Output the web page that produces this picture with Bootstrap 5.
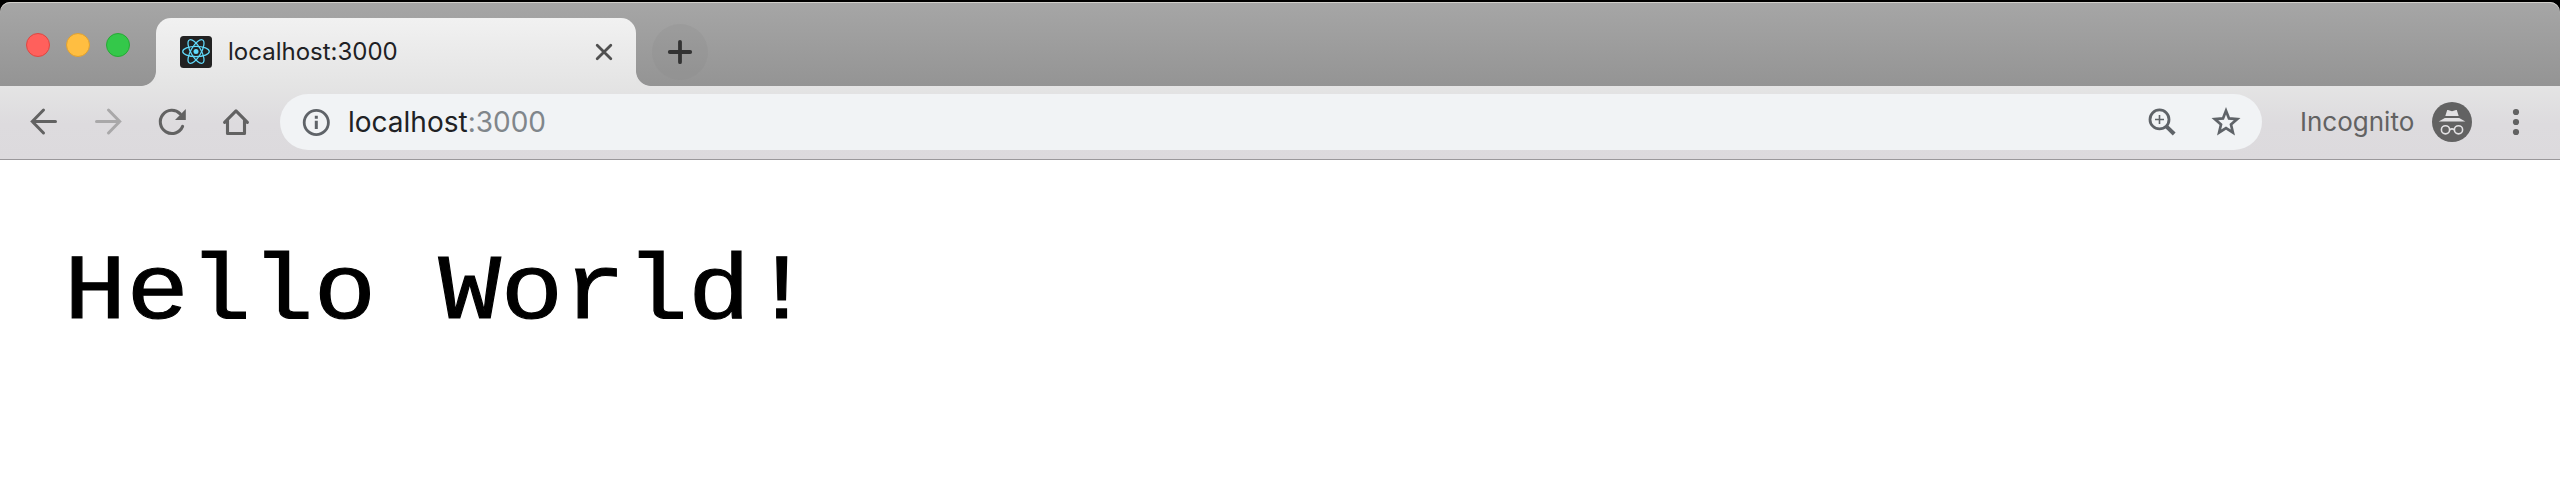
<!DOCTYPE html>
<html lang="en">
<head>
<meta charset="utf-8">
<title>localhost:3000</title>
<link href="https://cdn.jsdelivr.net/npm/bootstrap@5.3.0/dist/css/bootstrap.min.css" rel="stylesheet">
<script src="https://cdn.jsdelivr.net/npm/bootstrap@5.3.0/dist/js/bootstrap.bundle.min.js"></script>
<style>
body{height:504px;font-family:Inter,sans-serif;background:#fff}
svg{display:block;flex:none;overflow:visible}
.chrome{height:160px;background:#000;padding-top:2px}
.strip{height:84px;padding:16px 0 0 26px;background:linear-gradient(#a6a6a6,#949494);border-radius:10px 10px 0 0;box-shadow:inset 0 1px #d0ceca}
.lights{gap:16px;margin-top:15px;width:130px}
.light{width:24px;height:24px;border:1px solid}
.red{background:#ff605c;border-color:#de4742}
.amber{background:#ffbe41;border-color:#dea032}
.green{background:#34c84a;border-color:#27aa35}
.tab-open{width:480px;height:68px;padding:0 24px;border-radius:15px 15px 0 0;background:linear-gradient(#f1f1f1,#e4e4e4)}
.tab-open::before,.tab-open::after{content:"";position:absolute;bottom:0;width:15px;height:15px}
.tab-open::before{left:-15px;background:radial-gradient(circle at 0 0,transparent 14.5px,#e4e4e4 15.3px)}
.tab-open::after{right:-15px;background:radial-gradient(circle at 100% 0,transparent 14.5px,#e4e4e4 15.3px)}
.tab-title{font-size:24px;line-height:30px;margin-left:16px;color:#202124}
.plus{width:56px;height:56px;margin:6px 0 0 16px;background:rgba(135,135,135,.22)}
.tools{height:74px;padding:0 40px 1px 28px;background:linear-gradient(#e4e4e4,#dddbde 52%,#dcdadd);border-bottom:1px solid #9a989b;color:#626262}
.nav-icons{width:252px;gap:32px}
.pill{width:1982px;height:56px;border-radius:28px;background:#f1f3f5;padding:0 22px;color:#5f6368}
.address{font-size:28px;line-height:34px;margin-left:18px;color:#202124}
.port{color:#80868b}
.private{font-size:26px;line-height:34px;margin-left:38px;width:132px}
.hello{font:400 104px/118px "Liberation Mono",monospace;color:#000;margin:81px 0 0 64px;-webkit-text-stroke:1.2px #000;transform:scaleY(.885);transform-origin:0 0}
</style>
</head>
<body class="overflow-hidden">
<header class="chrome">
  <div class="strip d-flex align-items-start">
    <div class="lights d-flex"><span class="light red rounded-circle"></span><span class="light amber rounded-circle"></span><span class="light green rounded-circle"></span></div>
    <div class="tab-open position-relative d-flex align-items-center">
      <svg width="32" height="32" viewBox="0 0 32 32"><rect width="32" height="32" rx="3.5" fill="#222"/><g fill="none" stroke="#61dafb" stroke-width="1.25"><ellipse cx="16" cy="15.5" rx="13.3" ry="5.1"/><ellipse cx="16" cy="15.5" rx="13.3" ry="5.1" transform="rotate(60 16 15.5)"/><ellipse cx="16" cy="15.5" rx="13.3" ry="5.1" transform="rotate(120 16 15.5)"/></g><circle cx="16" cy="15.5" r="2.5" fill="#61dafb"/></svg>
      <span class="tab-title">localhost:3000</span>
      <svg class="ms-auto" width="16" height="16" viewBox="0 0 16 16"><path d="M1.2 1.2 14.8 14.8M14.8 1.2 1.2 14.8" stroke="#505050" stroke-width="2.8" stroke-linecap="round"/></svg>
    </div>
    <div class="plus rounded-circle d-flex align-items-center justify-content-center"><svg width="24" height="24" viewBox="0 0 24 24"><path d="M12 1.8V22.2M1.8 12H22.2" stroke="#333" stroke-width="3.8" stroke-linecap="round"/></svg></div>
  </div>
  <div class="tools d-flex align-items-center">
    <div class="nav-icons d-flex">
      <svg width="32" height="32" viewBox="0 0 32 32" fill="none" stroke="currentColor" stroke-width="3" stroke-linecap="round"><path d="M27.5 15.5H4.5M15.5 4 4.3 15.5 15.5 27"/></svg>
      <svg width="32" height="32" viewBox="0 0 32 32" fill="none" stroke="#a9a8a9" stroke-width="3" stroke-linecap="round"><path d="M4.5 15.5H27.5M16.5 4 27.7 15.5 16.5 27"/></svg>
      <svg width="32" height="32" viewBox="0 0 32 32"><path d="M26.6 20.4A11.6 11.6 0 1 1 24.2 7.8" fill="none" stroke="currentColor" stroke-width="3.1" stroke-linecap="round"/><path d="M29.8 3V14H19Z" fill="currentColor"/></svg>
      <svg width="32" height="32" viewBox="0 0 32 32" fill="none" stroke="currentColor" stroke-width="3.1" stroke-linejoin="round" stroke-linecap="round"><path d="M4.6 16.3 16 4.8 27.4 16.3M7.5 14.5V27.5H24.5V14.5"/></svg>
    </div>
    <div class="pill d-flex align-items-center">
      <svg width="28" height="28" viewBox="0 0 28 28"><circle cx="14.3" cy="14.5" r="12.1" fill="none" stroke="currentColor" stroke-width="2.8"/><path d="M12.8 7.8h3v3h-3zM12.8 12.8h3v8.2h-3z" fill="currentColor"/></svg>
      <span class="address">localhost<span class="port">:3000</span></span>
      <svg class="ms-auto" width="28" height="28" viewBox="0 0 28 28" fill="none" stroke="currentColor"><circle cx="11.5" cy="11.4" r="9.5" stroke-width="2.8"/><path d="M18.6 18.6 26.2 26" stroke-width="4"/><path d="M11.5 7V16M7 11.5H16" stroke-width="1.6"/></svg>
      <svg width="28" height="28" viewBox="0 0 28 28" style="margin-left:36px"><path d="M14 2.8 17 10.4 25.2 11.1 19 16.5 20.9 24.5 14 20.2 7.1 24.5 9 16.5 2.8 11.1 11 10.4Z" fill="none" stroke="currentColor" stroke-width="2.7"/></svg>
    </div>
    <span class="private">Incognito</span>
    <svg width="40" height="40" viewBox="0 0 40 40"><circle cx="20" cy="20" r="20" fill="#626262"/><g fill="#e2e1e3"><path d="M15.2 8.1Q15.5 7.8 16 8L20 9.2 24 8Q24.5 7.8 24.8 8.1L26.7 14H13.3Z"/><path d="M12.8 16H27.2L33.3 19.5H6.7Z"/></g><g fill="none" stroke="#e2e1e3" stroke-width="1.6"><circle cx="13.5" cy="27.8" r="4.1"/><circle cx="26.5" cy="27.8" r="4.1"/><path d="M17.6 27.8Q20 26 22.4 27.8"/></g></svg>
    <svg class="ms-auto" width="8" height="28" viewBox="0 0 8 28" fill="currentColor"><circle cx="4" cy="4" r="3.1"/><circle cx="4" cy="14" r="3.1"/><circle cx="4" cy="24" r="3.1"/></svg>
  </div>
</header>
<main><h1 class="hello">Hello World!</h1></main>
</body>
</html>
